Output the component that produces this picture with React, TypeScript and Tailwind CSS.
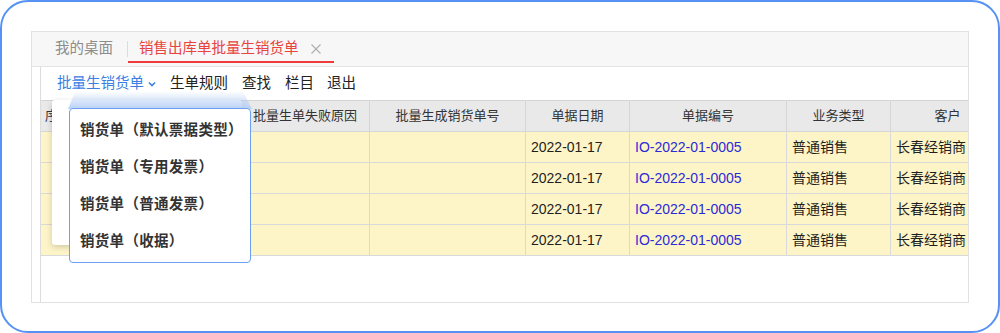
import React from "react";

const cols = [30, 170, 129, 156, 104, 157, 104, 114];
const headers = ["序号", "", "批量生单失败原因", "批量生成销货单号", "单据日期", "单据编号", "业务类型", "客户"];
const rows = [0, 1, 2, 3];

export default function App() {
  return (
    <div
      className="relative w-[1000px] h-[333px] bg-white overflow-hidden"
      style={{ fontFamily: '"Liberation Sans", "Noto Sans CJK SC", sans-serif' }}
    >
      <div className="w-full h-full rounded-[28px] border-2 border-[#5592f4] pt-[29px] pl-[29px]">
        <div className="w-[938px] h-[272px] border border-[#e2e2e2] flex flex-col">
          {/* tab bar */}
          <div className="h-[35px] shrink-0 bg-[#f7f7f7] border-b border-[#e4e4e4] flex items-center">
            <span className="ml-[23px] text-[14.5px] text-[#8c8c8c]">我的桌面</span>
            <span className="ml-[14px] w-px h-[16px] bg-[#dcdcdc]" />
            <div className="relative h-full flex items-center pl-[11px] pr-[12px]">
              <span className="text-[14.5px] text-[#e8443f]">销售出库单批量生销货单</span>
              <svg className="ml-[11px]" width="12" height="12" viewBox="0 0 12 12">
                <path d="M1.5 1.5 L10.5 10.5 M10.5 1.5 L1.5 10.5" stroke="#b0b0b0" strokeWidth="1.2" />
              </svg>
              <span className="absolute left-0 right-0 bottom-[3px] h-[2px] bg-[#ee3b3b]" />
            </div>
          </div>
          {/* body */}
          <div className="flex-1 flex min-h-0">
            <div className="w-[8px] shrink-0" />
            <div className="flex-1 min-w-0 border-l border-[#dcdcdc] flex flex-col overflow-hidden">
              {/* toolbar */}
              <div className="h-[33px] shrink-0 flex items-center pl-[16px] text-[14.5px] text-[#222]">
                <span className="text-[#3b7fe4]">批量生销货单</span>
                <svg className="ml-[3px] mt-[1px]" width="10" height="10" viewBox="0 0 10 10">
                  <path d="M2 3.5 L5 6.5 L8 3.5" stroke="#3b7fe4" strokeWidth="1.6" fill="none" />
                </svg>
                <span className="ml-[13px]">生单规则</span>
                <span className="ml-[14px]">查找</span>
                <span className="ml-[14px]">栏目</span>
                <span className="ml-[13px]">退出</span>
              </div>
              {/* table */}
              <div className="border-t border-[#d4d4d4] w-[1064px]">
                <div className="flex h-[31px] bg-[#e9e9e9] border-b border-[#d6d6d6]">
                  {headers.map((h, i) => (
                    <div
                      key={i}
                      style={{ width: cols[i] }}
                      className={`shrink-0 h-full border-r border-[#d6d6d6] flex items-center overflow-hidden whitespace-nowrap text-[13px] text-[#333] ${i === 0 ? "pl-[4px]" : "justify-center"}`}
                    >
                      {h}
                    </div>
                  ))}
                </div>
                {rows.map((r) => (
                  <div key={r} className="flex h-[31px] bg-[#fdf5c8] border-b border-[#d9d9d9]">
                    {cols.map((w, i) => (
                      <div
                        key={i}
                        style={{ width: w }}
                        className="shrink-0 h-full border-r border-[#d9d9d9] flex items-center pl-[5px] whitespace-nowrap text-[14px] text-[#1f1f1f]"
                      >
                        {i === 4 && "2022-01-17"}
                        {i === 5 && <span className="text-[#2a2ad8]">IO-2022-01-0005</span>}
                        {i === 6 && "普通销售"}
                        {i === 7 && "长春经销商"}
                      </div>
                    ))}
                  </div>
                ))}
              </div>
            </div>
          </div>
        </div>
      </div>

      {/* dropdown overlay */}
      <div className="absolute left-[52px] top-[100px] w-[190px] h-[145px] bg-white rounded-[3px] shadow-[0_2px_6px_rgba(0,0,0,0.18)]" />
      <div className="absolute left-[68px] top-[91px] w-[184px] h-[18px] bg-gradient-to-b from-[rgba(210,226,250,0)] to-[#b9d1f6] [clip-path:polygon(4%_0,95%_0,100%_100%,0_100%)]" />
      <div className="absolute left-[69px] top-[108px] w-[182px] h-[155px] bg-white border border-[#6c9ff0] rounded-[4px] pt-[3px]">
        {["销货单（默认票据类型）", "销货单（专用发票）", "销货单（普通发票）", "销货单（收据）"].map((t) => (
          <div key={t} className="h-[37px] flex items-center pl-[10px] whitespace-nowrap text-[14.5px] tracking-[0.3px] font-bold text-[#333]">
            {t}
          </div>
        ))}
      </div>
    </div>
  );
}
